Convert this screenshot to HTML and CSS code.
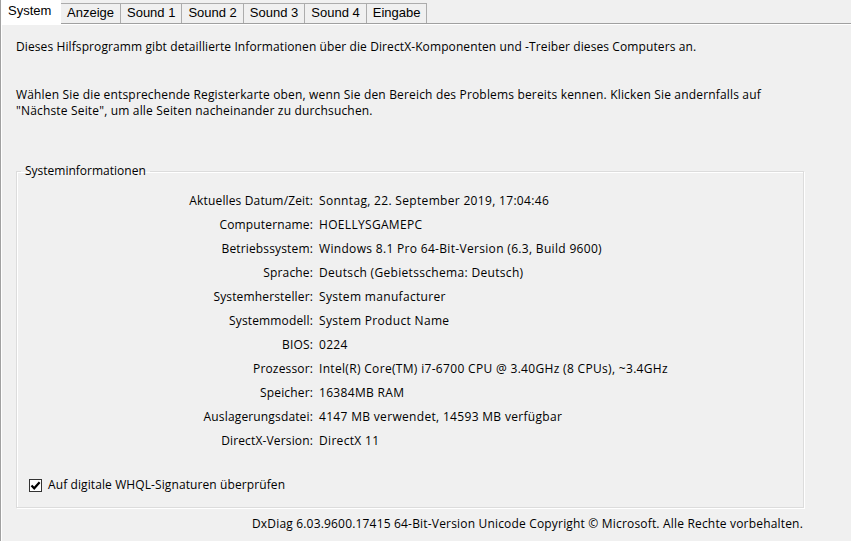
FILE: index.html
```html
<!DOCTYPE html>
<html lang="de">
<head>
<meta charset="utf-8">
<title>DirectX-Diagnoseprogramm</title>
<link rel="stylesheet" href="styles.css">
</head>
<body>
<div class="window">
  <div class="tabs">
    <div class="tab active">System</div>
    <div class="tab">Anzeige</div>
    <div class="tab">Sound 1</div>
    <div class="tab">Sound 2</div>
    <div class="tab">Sound 3</div>
    <div class="tab">Sound 4</div>
    <div class="tab last">Eingabe</div>
  </div>
  <div class="panel">
    <p class="intro">Dieses Hilfsprogramm gibt detaillierte Informationen über die DirectX-Komponenten und -Treiber dieses Computers an.</p>
    <p class="hint">Wählen Sie die entsprechende Registerkarte oben, wenn Sie den Bereich des Problems bereits kennen. Klicken Sie andernfalls auf<br>"Nächste Seite", um alle Seiten nacheinander zu durchsuchen.</p>
    <fieldset class="group">
      <legend>Systeminformationen</legend>
      <div class="info">
        <span class="k">Aktuelles Datum/Zeit:</span><span class="v">Sonntag, 22. September 2019, 17:04:46</span>
        <span class="k">Computername:</span><span class="v">HOELLYSGAMEPC</span>
        <span class="k">Betriebssystem:</span><span class="v">Windows 8.1 Pro 64-Bit-Version (6.3, Build 9600)</span>
        <span class="k">Sprache:</span><span class="v">Deutsch (Gebietsschema: Deutsch)</span>
        <span class="k">Systemhersteller:</span><span class="v">System manufacturer</span>
        <span class="k">Systemmodell:</span><span class="v">System Product Name</span>
        <span class="k">BIOS:</span><span class="v">0224</span>
        <span class="k">Prozessor:</span><span class="v">Intel(R) Core(TM) i7-6700 CPU @ 3.40GHz (8 CPUs), ~3.4GHz</span>
        <span class="k">Speicher:</span><span class="v">16384MB RAM</span>
        <span class="k">Auslagerungsdatei:</span><span class="v">4147 MB verwendet, 14593 MB verfügbar</span>
        <span class="k">DirectX-Version:</span><span class="v">DirectX 11</span>
      </div>
      <label class="check">
        <span class="box"><svg width="11" height="11" viewBox="0 0 11 11"><path d="M1.5 5.5 L4.2 8.3 L9.6 2.2" fill="none" stroke="#000" stroke-width="2.2"/></svg></span>
        <span>Auf digitale WHQL-Signaturen überprüfen</span>
      </label>
    </fieldset>
    <div class="footer">DxDiag 6.03.9600.17415 64-Bit-Version Unicode Copyright © Microsoft. Alle Rechte vorbehalten.</div>
  </div>
</div>
</body>
</html>
```
FILE: styles.css
```css
html, body {
  margin: 0;
  padding: 0;
  background: #f0f0f0;
}
body {
  width: 851px;
  height: 541px;
  overflow: hidden;
  font-family: "Open Sans", "Noto Sans", sans-serif;
  font-size: 12px;
  line-height: 16px;
  letter-spacing: 0.15px;
  color: #000;
}
.window {
  display: flex;
  flex-direction: column;
  height: 541px;
}
.tabs {
  display: flex;
  align-items: flex-end;
  height: 23px;
  position: relative;
  z-index: 1;
}
.tab {
  font-family: "Liberation Sans", Arial, sans-serif;
  font-size: 13px;
  letter-spacing: 0;
  height: 20px;
  line-height: 18px;
  padding: 0 6px;
  box-sizing: border-box;
  background: #f0f0f0;
  border: 1px solid #acacac;
  border-bottom: none;
  margin-left: -1px;
  color: #000;
}
.tab.active {
  height: 24px;
  margin-bottom: -1px;
  line-height: 21px;
  margin-left: 0;
  padding: 0 8px 0 7px;
  background: #fff;
  border: none;
  border-left: 1px solid #a0a0a0;
  width: 61px;
}
.tab.active + .tab {
  margin-left: 0;
  border-left: none;
}
.panel {
  flex: 1;
  border-top: 1px solid #a0a0a0;
  border-left: 1px solid #a0a0a0;
  box-shadow: inset 1px 1px 0 #fff;
  padding: 15px 0 0 15px;
}
.intro {
  margin: 0;
  letter-spacing: 0.1px;
}
.hint {
  margin: 32px 0 0;
  letter-spacing: 0.17px;
}
.group {
  margin: 44px 0 0;
  width: 786px;
  padding: 0 0 14px;
  border: 1px solid #dcdcdc;
  box-shadow: 1px 1px 0 #fff, inset 1px 1px 0 #fff;
  box-sizing: content-box;
}
.group legend {
  margin-left: 4px;
  padding: 0 4px;
  line-height: 16px;
  letter-spacing: 0;
}
.info {
  display: grid;
  grid-template-columns: 296px 1fr;
  column-gap: 6px;
  grid-auto-rows: 24px;
  align-items: center;
  margin-top: 10px;
}
.k {
  text-align: right;
  white-space: nowrap;
}
.v {
  white-space: nowrap;
  letter-spacing: 0.32px;
}
.check {
  display: flex;
  align-items: center;
  gap: 6px;
  margin: 24px 0 0 12px;
  height: 16px;
  letter-spacing: 0.1px;
}
.box {
  width: 11px;
  height: 11px;
  border: 1px solid #333;
  background: #fff;
  display: flex;
  align-items: center;
  justify-content: center;
}
.footer {
  width: 787px;
  text-align: right;
  margin-top: 8px;
  white-space: nowrap;
  letter-spacing: 0.18px;
}
```
